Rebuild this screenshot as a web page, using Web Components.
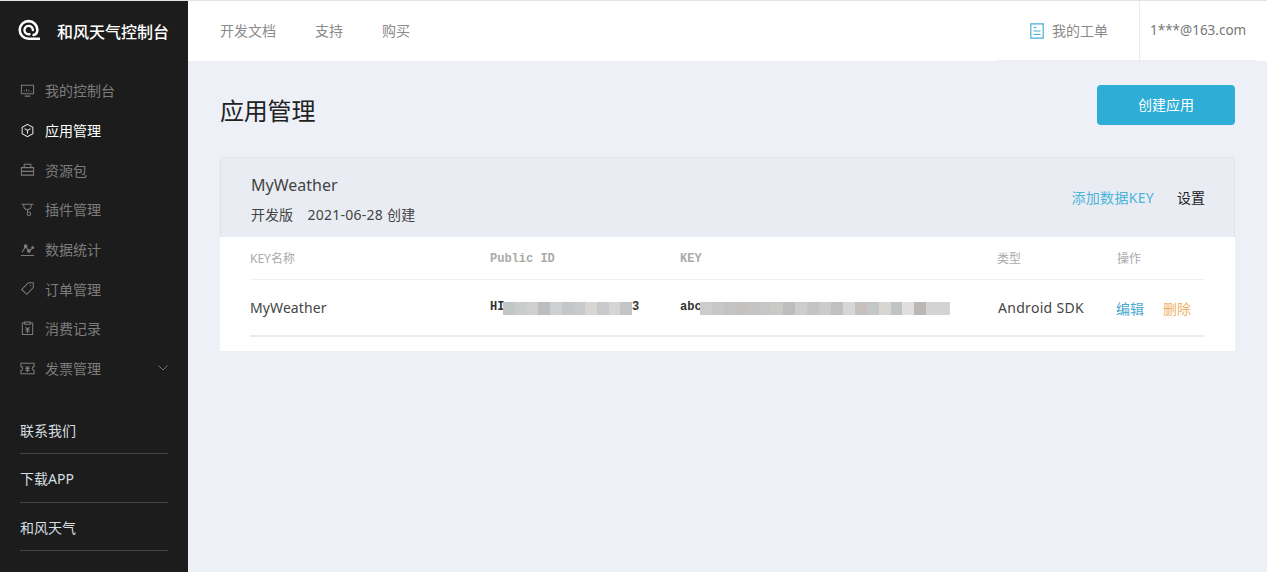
<!DOCTYPE html>
<html lang="zh">
<head>
<meta charset="utf-8">
<title>和风天气控制台</title>
<style>
  html, body { margin: 0; height: 100%; }
  body { font-family: "Noto Sans", "Noto Sans CJK SC", sans-serif; background: #edf0f7; overflow: hidden; }
</style>
</head>
<body>
<app-shell>
  <side-bar slot="side">
    <nav-item label="我的控制台"><svg viewBox="0 0 16 16"><path d="M1.500 2.500h13v9h-13zM5 14h6M4.500 9V8M7 9V6.500M9.500 9V7.500M12 9V8.500" /></svg></nav-item>
    <nav-item label="应用管理" active><svg viewBox="0 0 16 16"><path d="M8 1.500l5.700 3.200v6.600L8 14.500l-5.700-3.200V4.700zM4.800 6L8 8l3.200-2M8 8v3.500" /></svg></nav-item>
    <nav-item label="资源包"><svg viewBox="0 0 16 16"><path d="M1.500 6h13v8h-13zM4.500 6V2.500h7V6M1.500 10h13" /></svg></nav-item>
    <nav-item label="插件管理"><svg viewBox="0 0 16 16"><path d="M1.500 2.500h13M4 2.500v1.500c0 2.500 1.500 4 4 4s4-1.500 4-4V2.500M8 8v3" /><circle cx="9.500" cy="12.500" r="1.800" /></svg></nav-item>
    <nav-item label="数据统计"><svg viewBox="0 0 16 16"><path d="M1 14.500h14M2 11l4-6 3.500 4.500 4-3" /><circle cx="6" cy="4.500" r="1.500" fill="currentColor" /><circle cx="9.500" cy="9.500" r="1.500" fill="currentColor" /><circle cx="13.500" cy="6" r="1" fill="currentColor" /></svg></nav-item>
    <nav-item label="订单管理"><svg viewBox="0 0 16 16"><path d="M9 1.800h5.200V7l-7 7.200L1.800 9zM10.800 5.200l.9-.9" /></svg></nav-item>
    <nav-item label="消费记录"><svg viewBox="0 0 16 16"><path d="M5 2.200H2.500v12.300h11V2.200H11M5 1h6v2.500H5zM6 6.500L8 8.800l2-2.300M5.800 9h4.400M5.800 11h4.400M8 8.800V13" /></svg></nav-item>
    <nav-item label="发票管理" expandable><svg viewBox="0 0 16 16"><path d="M1 2.500h14v3.500a2 2 0 0 0 0 4v3.500H1V10a2 2 0 0 0 0-4zM6 5.500l2 2.300 2-2.300M5.800 8h4.400M5.800 10h4.400M8 7.800V12" /></svg></nav-item>
    <side-link slot="foot">联系我们</side-link>
    <side-link slot="foot">下载APP</side-link>
    <side-link slot="foot">和风天气</side-link>
  </side-bar>
  <top-bar slot="top"></top-bar>
  <page-head slot="main" title-text="应用管理" action="创建应用"></page-head>
  <app-card slot="main" name="MyWeather" plan="开发版" created="2021-06-28 创建">
    <key-table></key-table>
  </app-card>
</app-shell>

<script>
class AppShell extends HTMLElement {
  constructor() {
    super();
    this.attachShadow({ mode: 'open' });
    this.shadowRoot.innerHTML = `
      <style>
        :host { display: grid; grid-template-columns: 188px 1fr; grid-template-rows: 60px 1fr; height: 100vh; box-sizing: border-box; border-top: 1px solid #e2e2e2; }
        .side { grid-row: 1 / 3; display: flex; min-height: 0; }
        .top { display: block; min-width: 0; }
        main { padding: 24px 32px 0; min-width: 0; }
      </style>
      <div class="side"><slot name="side"></slot></div>
      <div class="top"><slot name="top"></slot></div>
      <main><slot name="main"></slot></main>
    `;
  }
}
customElements.define('app-shell', AppShell);

class SideBar extends HTMLElement {
  constructor() {
    super();
    this.attachShadow({ mode: 'open' });
    this.shadowRoot.innerHTML = `
      <style>
        :host { display: flex; flex-direction: column; width: 188px; background: #1c1c1c; }
        .brand { display: flex; align-items: center; gap: 17px; height: 60px; padding-left: 18px; box-sizing: border-box; color: #fff; font-size: 16px; font-weight: 500; }
        .brand svg { width: 22px; height: 22px; flex: none; margin-bottom: 3px; }
        nav { display: flex; flex-direction: column; margin-top: 9.500px; }
        .foot { display: flex; flex-direction: column; margin-top: 17.500px; padding: 0 20px; }
      </style>
      <div class="brand">
        <svg viewBox="0 0 24 24" fill="none" stroke="#fff" stroke-linecap="round">
          <path stroke-width="2.800" d="M23 21.500H11.500A9.600 9.600 0 1 1 21.100 12C21.100 14.500 19.500 17 17 17.500" />
          <path stroke-width="2.600" d="M12.500 16.600A4.600 4.600 0 1 1 16.200 12" />
        </svg>
        <span>和风天气控制台</span>
      </div>
      <nav><slot></slot></nav>
      <div class="foot"><slot name="foot"></slot></div>
    `;
  }
}
customElements.define('side-bar', SideBar);

class NavItem extends HTMLElement {
  constructor() {
    super();
    this.attachShadow({ mode: 'open' });
    this.shadowRoot.innerHTML = `
      <style>
        :host { display: flex; align-items: center; height: 39.700px; padding: 0 20px; color: #7c7c7c; font-size: 14px; }
        :host([active]) { color: #fff; }
        .icon { width: 15px; height: 15px; margin-right: 10px; flex: none; display: flex; }
        ::slotted(svg) { width: 15px; height: 15px; fill: none; stroke: currentColor; stroke-width: 1.100; }
        :host([active]) ::slotted(svg) { stroke: #e4e4e4; }
        .chev { margin-left: auto; width: 10px; height: 6px; display: none; }
        :host([expandable]) .chev { display: block; }
      </style>
      <span class="icon"><slot></slot></span>
      <span class="label"></span>
      <svg class="chev" viewBox="0 0 10 6" fill="none" stroke="#777" stroke-width="1"><path d="M.500.500L5 5 9.500.500" /></svg>
    `;
  }
  connectedCallback() {
    this.shadowRoot.querySelector('.label').textContent = this.getAttribute('label');
  }
}
customElements.define('nav-item', NavItem);

class SideLink extends HTMLElement {
  constructor() {
    super();
    this.attachShadow({ mode: 'open' });
    this.shadowRoot.innerHTML = `
      <style>
        :host { display: block; height: 48.500px; line-height: 50px; box-sizing: border-box; border-bottom: 1px solid #424545; color: #d6dee0; font-size: 14px; }
      </style>
      <slot></slot>
    `;
  }
}
customElements.define('side-link', SideLink);

class TopBar extends HTMLElement {
  constructor() {
    super();
    this.attachShadow({ mode: 'open' });
    this.shadowRoot.innerHTML = `
      <style>
        :host { display: flex; align-items: stretch; height: 60px; background: #fff; font-size: 14px; color: #8a8a8a; padding-left: 32px; }
        .links { display: flex; align-items: center; gap: 39px; padding-bottom: 3px; }
        .right { display: flex; margin-left: auto; margin-right: 10px; border-bottom: 1px solid #ececec; height: 59px; }
        .ticket { display: flex; align-items: center; gap: 8px; padding: 0 31px 0 33px; border-right: 1px solid #ececec; }
        .ticket span { margin-bottom: 1px; }
        .ticket svg { width: 14px; height: 16px; flex: none; }
        .user { display: flex; align-items: center; padding: 0 0 2px 10px; width: 117px; box-sizing: border-box; color: #777; font-size: 13.500px; white-space: nowrap; }
      </style>
      <div class="links"><span>开发文档</span><span>支持</span><span>购买</span></div>
      <div class="right">
        <div class="ticket">
          <svg viewBox="0 0 14 16" fill="none" stroke="#45b0d8" stroke-width="1.200"><path d="M.800.800h12.400v14.400H.800zM3.500 4.500h3M3.500 8h7M3.500 11.500h7" /></svg>
          <span>我的工单</span>
        </div>
        <div class="user">1***@163.com</div>
      </div>
    `;
  }
}
customElements.define('top-bar', TopBar);

class PageHead extends HTMLElement {
  constructor() {
    super();
    this.attachShadow({ mode: 'open' });
    this.shadowRoot.innerHTML = `
      <style>
        :host { display: flex; justify-content: space-between; align-items: flex-start; height: 72px; }
        h1 { margin: 8px 0 0; font-size: 24px; font-weight: 400; line-height: 36px; color: #222; letter-spacing: -.2px; }
        button { width: 138px; height: 40px; border: 0; border-radius: 4px; background: #2eaed6; color: #fff; font: inherit; font-size: 14px; padding: 0 0 2px; cursor: pointer; }
      </style>
      <h1></h1>
      <button type="button"></button>
    `;
  }
  connectedCallback() {
    this.shadowRoot.querySelector('h1').textContent = this.getAttribute('title-text');
    this.shadowRoot.querySelector('button').textContent = this.getAttribute('action');
  }
}
customElements.define('page-head', PageHead);

class AppCard extends HTMLElement {
  constructor() {
    super();
    this.attachShadow({ mode: 'open' });
    this.shadowRoot.innerHTML = `
      <style>
        :host { display: block; }
        header { display: flex; justify-content: space-between; align-items: center; height: 80px; box-sizing: border-box; padding: 0 29px 0 30px; background: #e9ecf2; border: 1px solid #dfe2e7; border-bottom: 0; border-radius: 4px 4px 0 0; color: #444; }
        .name { font-size: 16px; line-height: 22px; margin: 4px 0 9px; }
        .meta { font-size: 14px; line-height: 20px; display: flex; gap: 14.500px; }
        .created { letter-spacing: .25px; }
        .ops { display: flex; gap: 23px; font-size: 14px; margin-bottom: 1px; }
        .add { color: #4bb4da; letter-spacing: .3px; }
        .set { color: #222; }
        .body { background: #fff; padding: 0 30px 14px; }
      </style>
      <header>
        <div>
          <div class="name"></div>
          <div class="meta"><span class="plan"></span><span class="created"></span></div>
        </div>
        <div class="ops"><span class="add">添加数据KEY</span><span class="set">设置</span></div>
      </header>
      <div class="body"><slot></slot></div>
    `;
  }
  connectedCallback() {
    const root = this.shadowRoot;
    root.querySelector('.name').textContent = this.getAttribute('name');
    root.querySelector('.plan').textContent = this.getAttribute('plan');
    root.querySelector('.created').textContent = this.getAttribute('created');
  }
}
customElements.define('app-card', AppCard);

// pixelated bar that hides part of a key
class BlurBar extends HTMLElement {
  constructor() {
    super();
    this.attachShadow({ mode: 'open' });
    this.shadowRoot.innerHTML = `
      <style>
        :host { display: inline-flex; height: 13px; vertical-align: middle; }
        i { display: block; flex: 1; filter: blur(.4px); }
      </style>
    `;
  }
  connectedCallback() {
    (this.getAttribute('colors') || '').split(' ').forEach(c => {
      const seg = document.createElement('i');
      seg.style.background = c;
      this.shadowRoot.appendChild(seg);
    });
  }
}
customElements.define('blur-bar', BlurBar);

class KeyTable extends HTMLElement {
  constructor() {
    super();
    this.attachShadow({ mode: 'open' });
    this.shadowRoot.innerHTML = `
      <style>
        :host { display: block; font-size: 14px; color: #444; }
        .row { display: grid; grid-template-columns: 240px 190px 317px 120px 1fr; align-items: center; }
        .head { height: 42px; border-bottom: 1px solid #eef0f3; font-size: 12px; color: #aaa; }
        .data { height: 55px; border-bottom: 2px solid #e9ecf2; }
        .data > span:first-child { letter-spacing: .1px; }
        .mono { font-family: "Liberation Mono", monospace; font-weight: 700; font-size: 12px; }
        .head .mono { color: #aaa; padding-top: 1px; }
        .key { display: flex; align-items: center; color: #333; padding-bottom: 1px; }
        .key blur-bar { margin-top: 2px; }
        .sdk { letter-spacing: .3px; margin-left: 1px; }
        .acts { display: flex; gap: 19px; margin-left: -1px; }
        .edit { color: #4ba8cf; }
        .del { color: #eeb068; }
      </style>
      <div class="row head">
        <span>KEY名称</span>
        <span class="mono">Public ID</span>
        <span class="mono">KEY</span>
        <span>类型</span>
        <span>操作</span>
      </div>
      <div class="row data">
        <span>MyWeather</span>
        <span class="mono key"><span>HI</span><blur-bar style="width:129px;margin-left:-1.400px" colors="#c3c6c6 #c9cccc #cfcfcd #bcbdbe #ccd0d0 #c4c6c7 #c7c9ca #d8d6d3 #c8c9cc #d6d5d3 #c3c5c7"></blur-bar><span>3</span></span>
        <span class="mono key"><span>abc</span><blur-bar style="width:250px;margin-left:-1.600px" colors="#cccccc #c7c7c7 #c3c3c3 #c4c1be #c4c4c4 #c6c6c6 #cbc9c6 #bcbebd #cdcdcb #c4c4c4 #cbcbcb #bfc1bf #d6d6d6 #c6c1bf #c3c7c7 #d8d6d3 #c0c3c3 #e0dfde #b9b8b6 #d3d3d3 #d3d3d3"></blur-bar></span>
        <span class="sdk">Android SDK</span>
        <span class="acts"><span class="edit">编辑</span><span class="del">删除</span></span>
      </div>
    `;
  }
}
customElements.define('key-table', KeyTable);
</script>
</body>
</html>
